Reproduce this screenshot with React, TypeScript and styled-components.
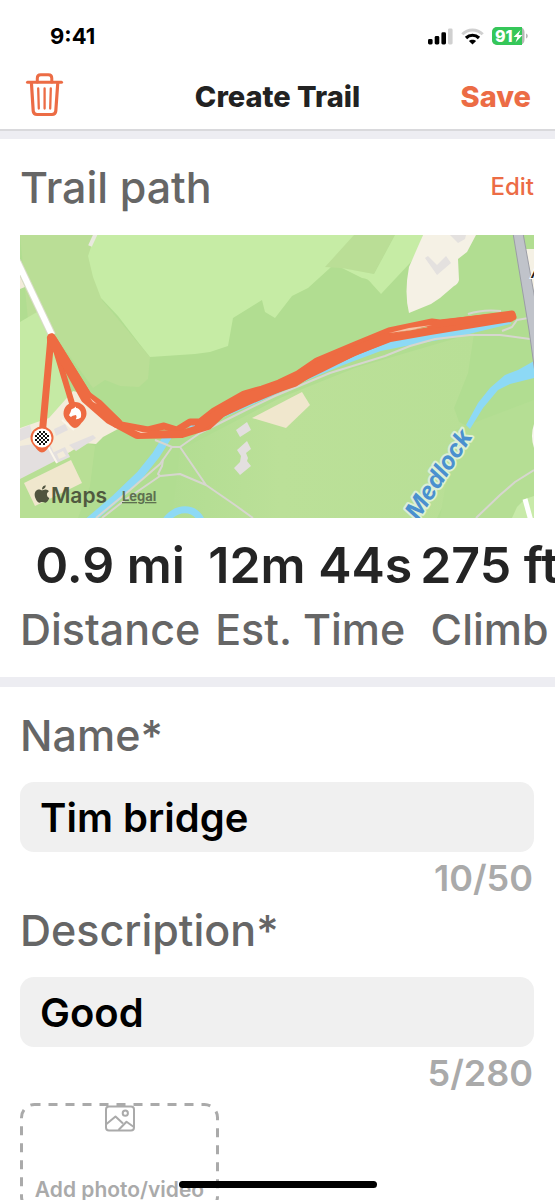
import React, { useState } from "react";
import styled, { createGlobalStyle } from "styled-components";
import { FaApple } from "react-icons/fa";

const accent = "#ec6c45";
const muted = "#666666";
const faint = "#aaaaaa";
const font = 'Inter, Roboto, "Liberation Sans", sans-serif';

const GlobalStyle = createGlobalStyle`
  *, *::before, *::after { box-sizing: border-box; }
  body { margin: 0; background: #fff; font-family: ${font}; }
  button, input { font-family: inherit; }
`;

const Screen = styled.div`
  display: flex;
  flex-direction: column;
  height: 100vh;
  overflow: hidden;
  background: #fff;
`;

const StatusBar = styled.div`
  display: flex;
  flex: none;
  align-items: center;
  justify-content: space-between;
  height: 64px;
  padding: 8px 27px 0 50px;
`;

const Clock = styled.time`
  font-size: 22px;
  line-height: 28px;
  font-weight: 700;
  color: #000;
`;

const StatusIcons = styled.div`
  display: flex;
  align-items: center;
  gap: 8px;
`;

const Header = styled.header`
  display: grid;
  flex: none;
  grid-template-columns: 1fr auto 1fr;
  align-items: center;
  height: 67px;
  padding: 0 24px;
  border-bottom: 2px solid #d9d9dc;
`;

const TextButton = styled.button<{ $strong?: boolean }>`
  padding: 0;
  border: 0;
  background: none;
  color: ${accent};
  font-size: ${(p) => (p.$strong ? 29 : 24)}px;
  line-height: 32px;
  font-weight: ${(p) => (p.$strong ? 800 : 500)};
  justify-self: end;
`;

const IconButton = styled.button`
  display: flex;
  padding: 0 0 4px;
  border: 0;
  background: none;
  justify-self: start;
`;

const Title = styled.h1`
  margin: 0;
  font-size: 29px;
  line-height: 32px;
  font-weight: 800;
  color: #222;
`;

const Content = styled.main`
  flex: 1;
  min-height: 0;
  overflow: hidden;
`;

const Divider = styled.div<{ $size: number }>`
  height: ${(p) => p.$size}px;
  background: #ededf2;
`;

const Section = styled.section`
  padding: 0 21px 0 20px;
`;

const SectionHead = styled.div`
  display: flex;
  align-items: center;
  justify-content: space-between;
  height: 96px;
`;

const Heading = styled.h2`
  margin: 0;
  font-size: 43px;
  line-height: 50px;
  font-weight: 500;
  color: ${muted};
`;

const MapView = styled.svg`
  display: block;
  width: 100%;
  height: 283px;
`;

const Stats = styled.dl`
  display: flex;
  gap: 8px;
  margin: 0;
  padding: 17px 0 18px;
  white-space: nowrap;
`;

const Stat = styled.div`
  display: flex;
  flex: none;
  flex-direction: column-reverse;
  gap: 4px;
  align-items: center;
`;

const StatLabel = styled.dt`
  font-size: 43px;
  line-height: 60px;
  font-weight: 500;
  color: ${muted};
`;

const StatValue = styled.dd`
  margin: 0;
  font-size: 50px;
  line-height: 60px;
  font-weight: 600;
  color: #242424;
`;

const Form = styled.form`
  padding: 23px 21px 0 20px;
`;

const FieldLabel = styled.label`
  display: block;
  margin-bottom: 22px;
  font-size: 43px;
  line-height: 50px;
  font-weight: 500;
  color: ${muted};
`;

const TextInput = styled.input`
  display: block;
  width: 100%;
  height: 70px;
  padding: 0 20px;
  border: 0;
  border-radius: 14px;
  outline: 0;
  background: #f0f0f0;
  font-size: 40px;
  font-weight: 600;
  color: #000;
`;

const Counter = styled.div`
  padding-right: 1px;
  font-size: 36px;
  line-height: 53px;
  font-weight: 600;
  text-align: right;
  color: ${faint};
`;

const PhotoButton = styled.button`
  position: relative;
  display: flex;
  flex-direction: column;
  align-items: center;
  justify-content: space-between;
  width: 199px;
  height: 108px;
  margin-top: 3px;
  padding: 2px 0 8px;
  border: 0;
  background: none;
  color: ${faint};
  font-size: 21px;
  line-height: 26px;
  font-weight: 600;
  white-space: nowrap;
`;

const DashedFrame = styled.svg`
  position: absolute;
  inset: 0;
  width: 100%;
  height: 100%;
`;

const PhotoIcon = styled.svg`
  position: relative;
`;

const HomeIndicator = styled.div`
  position: fixed;
  bottom: 12px;
  left: 50%;
  width: 198px;
  height: 7px;
  border-radius: 4px;
  background: #000;
  transform: translateX(-50%);
`;

function SignalIcon() {
  return (
    <svg width="25" height="17" viewBox="0 0 25 17" aria-hidden="true">
      <rect x="0" y="11" width="4.6" height="5.5" rx="1.4" />
      <rect x="6.7" y="8" width="4.6" height="8.5" rx="1.4" />
      <rect x="13.4" y="4.3" width="4.6" height="12.2" rx="1.4" />
      <rect x="20" y="0.5" width="4.6" height="16" rx="1.4" fill="#d0d0d0" />
    </svg>
  );
}

function WifiIcon() {
  return (
    <svg width="23" height="17" viewBox="0 0 23 17" fill="none" aria-hidden="true">
      <path d="M1.3 6.3C7 .6 16 .6 21.7 6.3" stroke="#d0d0d0" strokeWidth="3" />
      <path d="M5 10C8.8 6.3 14.2 6.3 18 10" stroke="#000" strokeWidth="3.2" />
      <path d="M11.5 16.6 7.900 13c2-1.800 5.200-1.800 7.200 0z" fill="#000" />
    </svg>
  );
}

function BatteryIcon() {
  return (
    <svg width="36" height="18" viewBox="0 0 36 18" aria-hidden="true">
      <rect x="0" y="0" width="32.5" height="18" rx="5" fill="#b5b9b6" />
      <path d="M5 0h25v18H5a5 5 0 0 1-5-5V5a5 5 0 0 1 5-5z" fill="#35c759" />
      <path d="M34 6.5c2.400.8 2.400 4.200 0 5z" fill="#b8b8b8" />
      <text x="3" y="14.800" fontFamily={font} fontSize="16" fontWeight="800" fill="#fff">91</text>
      <path d="M28.500 3 21.500 10h3.900l-1.900 5.500L30.500 8h-4z" fill="#fff" />
    </svg>
  );
}

function TrashIcon() {
  return (
    <svg width="41" height="44" viewBox="24 73 41 44" fill="none" stroke={accent} strokeLinecap="round" strokeLinejoin="round" aria-hidden="true">
      <path d="M27.5 82.3h34" strokeWidth="3" />
      <path d="M37.3 82v-3.800q0-3.400 3.400-3.400h7.700q3.400 0 3.400 3.400V82" strokeWidth="3" />
      <path d="m31.4 82.5 1.800 28.400q.3 3.600 3.800 3.600h15q3.500 0 3.800-3.600l2-28.400" strokeWidth="3.2" />
      <path d="m38.2 88.500.6 20M44.6 88.500v20M50.8 88.500l-.6 20" strokeWidth="2.3" />
    </svg>
  );
}

const checks = [
  [-1, -3], [1, -3], [-2, -2], [0, -2], [2, -2],
  [-3, -1], [-1, -1], [1, -1], [3, -1], [-2, 0], [0, 0], [2, 0],
  [-3, 1], [-1, 1], [1, 1], [3, 1], [-2, 2], [0, 2], [2, 2], [-1, 3], [1, 3],
];

function TrailMap() {
  return (
    <MapView viewBox="20 235 514 283" preserveAspectRatio="xMidYMid slice" role="group" aria-label="Trail map">
      <defs>
        <linearGradient id="meadow" x1="0" x2="1">
          <stop offset="0" stopColor="#b2dd92" />
          <stop offset=".35" stopColor="#bbe098" />
          <stop offset="1" stopColor="#b8df96" />
        </linearGradient>
      </defs>
      <rect x="20" y="235" width="514" height="283" fill="#b1dd91" />
      {/* Fields and woodland */}
      <path d="M20 235H96L88 256l14 44 48 57-2 22-9 8-19-1-15-6-12 8-35-48-30-20z" fill="#bade96" />
      <path d="M95 235 88 256l5 21 8 21 17 18 20 26 12 15 45-3 15-2 18-6 5-28 29-18 3 12 10 6 17-22 16-8 22-20 30-33z" fill="#c6eca5" />
      <path d="M354 235h41l-21 39-34-6-15-1z" fill="#bade96" />
      <path d="M395 235h28q-5 15-12 27l-30 32-9-10q-4-6-10-6l-20-10 32 6z" fill="#c6eca5" />
      <path d="m180 450 100-52 75-30 119-35-6 40-14 35 5 14 20 10-42 86H172z" fill="url(#meadow)" />
      <path d="M455 430 534 400v118h-94z" fill="#b5de94" />
      <path d="m20 322 17-10 13 28 21 50-9 22-14 12-28 4z" fill="#c5eaa4" />
      <path d="m20 478 60-38 15 6-5 40-12 32H20z" fill="#b8df95" />
      <path d="m512 518 5-11 8-8 9-3v22z" fill="#c8eaa9" />
      {/* Built-up land */}
      <path d="M423 235h53l-9 17-9 7 1 21q-1 4-5 6l-14 12-9 6-22 9q-5-20 0-46z" fill="#f5f1e5" />
      <path d="m425 258 3-2 9 9 9-9 5 7-14 12zM450 235h16l-1 4-7 4z" fill="#e4e1df" />
      <path d="M524 249h10v57h-3z" fill="#f5f1e5" />
      <path d="M534 424q-4 12 0 24z" fill="#f8f6ef" />
      <path d="m73 391 8 2 7 7 30 29-15 8-7 7-12-1-14 9-50 26v-50l29-10z" fill="#f3ecdb" />
      <g fill="#e3dfdf">
        <path d="m20 429 10-4 3 11-13 5zM20 446l29-4 8 18-37 19zM54 429l11-5 3 6-12 6zM69 445l24-10 3 3-20 13z" />
        <path d="m52 453 13-6 5 10-13 6z" />
        <path d="m236 430 11-8 4 8-11 7zM237 450l10-9 4 8-5 4 2 5-1 3 4 5-11 9-6-7 6-6 1-6z" />
      </g>
      <path d="m57 454 6-3 3 5-7 3z" fill="#f3ecdb" />
      <path d="m45 441 12 22M62 420l12 10" stroke="#fbf6ea" strokeWidth="2" />
      <path d="m24 483 47-23 11 23-47 23z" fill="#f0e7cd" />
      <path d="m252 418 50-26 8 13-24 23z" fill="#f0e7cd" />
      <path d="m20 276 5 11-5 2z" fill="#f3ecdb" />
      {/* Water */}
      <g fill="none" stroke="#8dd9f5">
        <path d="m88 522 28-24 24-23 16-20 12-19" strokeWidth="8" />
        <path d="m190 429 36-17 34-15 42-19 38-16 40-15 30-6 50-9 50-12" strokeWidth="8" />
        <path d="M164 523c12-18 31-17 38-1" strokeWidth="7" />
      </g>
      <path d="m534 361-16 9-13 5-15 13-12 15-12 22 4 4 13-21 15-18 12-6 24-6z" fill="#8dd9f5" />
      {/* Footpaths, road and railway */}
      <g fill="none" stroke="#d7d6cf" strokeWidth="2" strokeLinejoin="round">
        <path d="m96 518 34-28 30-26 12-17h8l20-14 40-20 35-17 55-23 55-17 25-10 25-7 35-4h30l30 4" />
        <path d="m102 518 23-18 35-24 20-2 26 11 29 20 18 13M180 447l26 38M163 459l-1 7-4 8 2 2M155 440l17 7" />
        <path d="m534 470-19 12-15 13-24 23M468 314q15-5 33-3M534 317l-17 3-5 7-10 4" />
      </g>
      <path d="m17 261 35 74" stroke="#d9dcc9" strokeWidth="8" />
      <path d="m17 261 35 74" stroke="#fff" strokeWidth="6" />
      <path d="m90 246 6-13" stroke="#e9e9df" strokeWidth="4" />
      <path d="m525 499 6 22" stroke="#fff" strokeWidth="5" />
      <path d="m513 233 10 0 13 72v75l-7-50z" fill="#c0c3ca" stroke="#9b9da6" strokeWidth="1" />
      <text x="531" y="278" fontFamily={font} fontSize="13" fontWeight="700" fontStyle="italic" fill="#222" stroke="#fff" strokeWidth="2" paintOrder="stroke">A</text>
      <text
        transform="translate(418 521) rotate(-57)"
        fontFamily={font}
        fontSize="24"
        fontWeight="700"
        fontStyle="italic"
        fill="#4a90cf"
        stroke="#dcefd6"
        strokeWidth="4"
        strokeLinejoin="round"
        paintOrder="stroke"
      >
        Medlock
      </text>
      {/* Recorded route */}
      <g fill="none" stroke="#ee6b42" strokeLinejoin="round" strokeLinecap="round">
        <path d="m42 436 9-99" strokeWidth="7" />
        <path d="m74 410-22-73" strokeWidth="6" />
        <path d="m52 337 36 58 11 8 22 22 27 5 16-4 13 4 13-8h10l14-11 30-17 18-5 17-6 19-9 19-13 38-16 34-14 43-9 8 1 72-8" strokeWidth="7" />
        <path d="m51 338 34 61 24 21 28 15 45-1 26-8 14-13 24-11 45-19 31-15 34-17 34-13 40-7 80-13" strokeWidth="8" />
        <path d="m52 340 36 58M98 405l19 18M200 426l22-14 30-16 42-14 20-13 38-17 34-14" strokeWidth="10" />
        <path d="m430 325 82-11 1 3" strokeWidth="7" />
      </g>
      <path d="m389 333 20-5 23-3-20 5z" fill="#f6c4a8" />
      <path d="m134 430 8 2h6l-7 1zM90 398l7 6-4-2z" fill="#f8d9c4" />
      {/* Start and finish pins */}
      <path d="M75 402a11.500 11.500 0 0 1 11.500 11.500c0 5-4 8-7.500 12.500q-4 4-8 0c-3.500-4.500-7.500-7.500-7.500-12.500A11.500 11.500 0 0 1 75 402z" fill="#ee6b42" />
      <path d="m75.500 406.500.7 1.500c4 .6 5.800 4.500 4.600 9.500q-2 2-5 1.800 1.600-2.500.2-4.300l-3.300.8-1.800 1.200-1.900-1.800 1.500-3 1-3 2.800-1.200z" fill="#fff" />
      <path d="M42 426.500A11.500 11.500 0 0 1 53.500 438c0 5-4 8-7.500 12.500q-4 4-8 0c-3.500-4.500-7.500-7.500-7.500-12.500A11.500 11.500 0 0 1 42 426.500z" fill="#ee6b42" />
      <circle cx="42" cy="438" r="9.500" fill="#fff" />
      {checks.map(([cx, cy]) => (
        <rect key={`${cx},${cy}`} x={41 + cx * 2} y={437 + cy * 2} width="2" height="2" fill="#111" />
      ))}
      {/* Map attribution */}
      <FaApple x="32" y="484" size={20} color="#50533f" />
      <text x="51" y="503" fontFamily={font} fontSize="21" fontWeight="600" fill="#50593f">Maps</text>
      <a href="#legal">
        <text x="122" y="501" fontFamily={font} fontSize="13" fontWeight="700" fill="#5e7050" textDecoration="underline">Legal</text>
      </a>
    </MapView>
  );
}

const stats = [
  { label: "Distance", value: "0.9 mi" },
  { label: "Est. Time", value: "12m 44s" },
  { label: "Climb", value: "275 ft" },
];

type FieldProps = { id: string; label: string; initial: string; count: string };

function Field({ id, label, initial, count }: FieldProps) {
  const [value, setValue] = useState(initial);
  return (
    <>
      <FieldLabel htmlFor={id}>{label}</FieldLabel>
      <TextInput id={id} type="text" value={value} onChange={(e) => setValue(e.target.value)} />
      <Counter>{count}</Counter>
    </>
  );
}

export default function App() {
  return (
    <>
      <GlobalStyle />
      <Screen>
        <StatusBar>
          <Clock>9:41</Clock>
          <StatusIcons>
            <SignalIcon />
            <WifiIcon />
            <BatteryIcon />
          </StatusIcons>
        </StatusBar>
        <Header>
          <IconButton type="button" aria-label="Delete trail">
            <TrashIcon />
          </IconButton>
          <Title>Create Trail</Title>
          <TextButton type="button" $strong>Save</TextButton>
        </Header>
        <Content>
          <Divider $size={8} />
          <Section>
            <SectionHead>
              <Heading>Trail path</Heading>
              <TextButton type="button">Edit</TextButton>
            </SectionHead>
            <TrailMap />
            <Stats>
              {stats.map((s) => (
                <Stat key={s.label}>
                  <StatLabel>{s.label}</StatLabel>
                  <StatValue>{s.value}</StatValue>
                </Stat>
              ))}
            </Stats>
          </Section>
          <Divider $size={10} />
          <Form onSubmit={(e) => e.preventDefault()}>
            <Field id="name" label="Name*" initial="Tim bridge" count="10/50" />
            <Field id="description" label="Description*" initial="Good" count="5/280" />
            <PhotoButton type="button">
              <DashedFrame aria-hidden="true" viewBox="0 0 199 108">
                <rect x="1.500" y="1.500" width="196" height="105" rx="13" fill="none" stroke={faint} strokeWidth="3" strokeDasharray="9 8" strokeDashoffset="3" />
              </DashedFrame>
              <PhotoIcon width="30" height="27" viewBox="0 0 30 27" fill="none" stroke={faint} strokeWidth="2" strokeLinejoin="round" aria-hidden="true">
                <rect x="1" y="1.500" width="28" height="24" rx="3" />
                <circle cx="20.300" cy="8.200" r="2.600" />
                <path d="m1.500 19 9-7.500L18 18.500M13.500 25l8-8.300 7 5" />
              </PhotoIcon>
              <span>Add photo/video</span>
            </PhotoButton>
          </Form>
        </Content>
        <HomeIndicator />
      </Screen>
    </>
  );
}
